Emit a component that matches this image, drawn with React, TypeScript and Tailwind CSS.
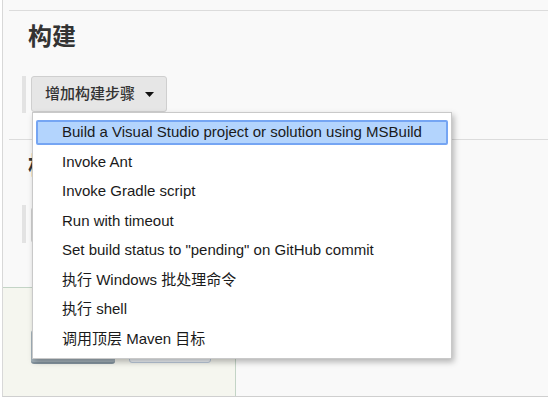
import React from "react";

const items = [
  "Build a Visual Studio project or solution using MSBuild",
  "Invoke Ant",
  "Invoke Gradle script",
  "Run with timeout",
  'Set build status to "pending" on GitHub commit',
  "执行 Windows 批处理命令",
  "执行 shell",
  "调用顶层 Maven 目标",
];

export default function App() {
  return (
    <div
      className="relative w-[548px] h-[417px] overflow-hidden bg-white"
      style={{ fontFamily: '"Liberation Sans", "Noto Sans CJK SC", sans-serif' }}
    >
      <div className="ml-[2px] h-[397px] border-l border-b border-l-[#d8d8d8] border-b-[#cfcfcf] bg-[#f9f9f9] flex flex-col pt-[10px]">
        {/* section 1 */}
        <div className="ml-[6px] border-t border-[#dcdcdc] h-[129px] flex flex-col">
          <div className="pl-[19px] mt-[10px] text-[24px] leading-[32px] font-bold text-[#333]">构建</div>
          <div className="flex mt-[23px] ml-[13px]">
            <div className="w-[4px] h-[37px] bg-[#e3e3e3]" />
            <div className="ml-[5px] h-[36px] w-[136px] rounded-[3px] border border-[#cfcfcf] bg-[#e6e6e6] flex items-center pl-[13px] text-[15px] font-medium text-[#333]">
              <span>增加构建步骤</span>
              <svg width="9" height="5" viewBox="0 0 9 5" className="ml-[10px] mt-[1px]">
                <path d="M0 0 H9 L4.5 5 Z" fill="#111" />
              </svg>
            </div>
          </div>
        </div>
        {/* section 2 */}
        <div className="ml-[6px] border-t border-[#dcdcdc] h-[148px] flex flex-col">
          <div className="pl-[19px] mt-[10px] text-[24px] leading-[32px] font-bold text-[#333]">构建后操作</div>
          <div className="flex mt-[23px] ml-[13px]">
            <div className="w-[4px] h-[38px] bg-[#e3e3e3]" />
            <div className="ml-[5px] mt-[2px] h-[36px] w-[160px] rounded-[3px] border border-[#cfcfcf] bg-[#e6e6e6]" />
          </div>
        </div>
        {/* bottom bar */}
        <div className="flex-1 flex">
          <div className="w-[233px] border border-b-0 border-l-0 border-[#c3d4c6] bg-[#f5f6ef] flex items-start pt-[42px] pl-[28px] gap-[14px]">
            <div className="w-[84px] h-[34px] rounded-[3px] bg-[#a3b1ba] border-b-2 border-[#8595a0]" />
            <div className="w-[82px] h-[33px] rounded-[3px] bg-[#eef2f7] border border-[#bccadb]" />
          </div>
        </div>
      </div>

      {/* dropdown menu */}
      <div className="absolute left-[32px] top-[112px] w-[420px] h-[247px] bg-white border border-[#c9c9c9] shadow-[2px_3px_6px_rgba(0,0,0,0.28)] pt-[4.75px]">
        {items.map((t, i) => (
          <div key={i} className="h-[29.5px] px-[3px] flex items-center">
            {i === 0 ? (
              <div className="w-full h-[25px] flex items-center pl-[24px] text-[15px] text-[#1a1a1a] rounded-[2px] bg-[#b3d4fd] border-2 border-[#75a5f3]">
                {t}
              </div>
            ) : (
              <div className="w-full h-[25px] flex items-center pl-[26px] text-[15px] text-[#1a1a1a]">
                {t}
              </div>
            )}
          </div>
        ))}
      </div>
    </div>
  );
}
